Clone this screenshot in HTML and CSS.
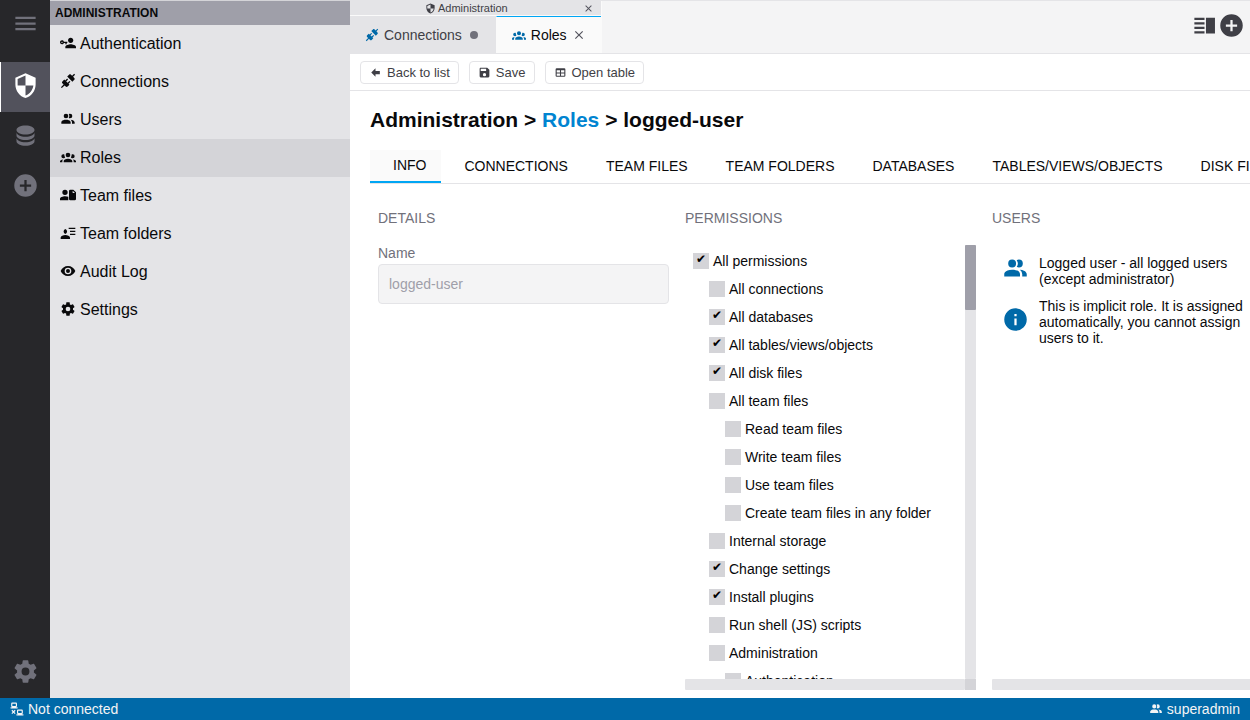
FILE: index.html
```html
<!DOCTYPE html>
<html lang="en">
<head>
  <meta charset="UTF-8">
  <meta name="viewport" content="width=device-width, initial-scale=1.0">
  <title>Roles</title>
  <link rel="stylesheet" href="styles.css">
</head>
<body>
  <svg class="sprite" aria-hidden="true">
    <symbol id="menu" viewBox="0 0 24 24"><path d="M3,6H21V8H3V6M3,11H21V13H3V11M3,16H21V18H3V16Z"/></symbol>
    <symbol id="shield" viewBox="0 0 24 24"><path d="M12,12H19C18.47,16.11 15.72,19.78 12,20.92V12H5V6.3L12,3.19M12,1L3,5V11C3,16.55 6.84,21.73 12,23C17.16,21.73 21,16.55 21,11V5L12,1Z"/></symbol>
    <symbol id="database" viewBox="0 0 24 24"><path d="M12,3C7.58,3 4,4.79 4,7C4,9.21 7.58,11 12,11C16.42,11 20,9.21 20,7C20,4.79 16.42,3 12,3M4,9V12C4,14.21 7.58,16 12,16C16.42,16 20,14.21 20,12V9C20,11.21 16.42,13 12,13C7.58,13 4,11.21 4,9M4,14V17C4,19.21 7.58,21 12,21C16.42,21 20,19.21 20,17V14C20,16.21 16.42,18 12,18C7.58,18 4,16.21 4,14Z"/></symbol>
    <symbol id="plus" viewBox="0 0 24 24"><path d="M17,13H13V17H11V13H7V11H11V7H13V11H17M12,2A10,10 0 0,0 2,12A10,10 0 0,0 12,22A10,10 0 0,0 22,12A10,10 0 0,0 12,2Z"/></symbol>
    <symbol id="cog" viewBox="0 0 24 24"><path d="M12,15.5A3.5,3.5 0 0,1 8.5,12A3.5,3.5 0 0,1 12,8.5A3.5,3.5 0 0,1 15.5,12A3.5,3.5 0 0,1 12,15.5M19.43,12.97C19.47,12.65 19.5,12.33 19.5,12C19.5,11.67 19.47,11.34 19.43,11L21.54,9.37C21.73,9.22 21.78,8.95 21.66,8.73L19.66,5.27C19.54,5.05 19.27,4.96 19.05,5.05L16.56,6.05C16.04,5.66 15.5,5.32 14.87,5.07L14.5,2.42C14.46,2.18 14.25,2 14,2H10C9.75,2 9.54,2.18 9.5,2.42L9.13,5.07C8.5,5.32 7.96,5.66 7.44,6.05L4.95,5.05C4.73,4.96 4.46,5.05 4.34,5.27L2.34,8.73C2.21,8.95 2.27,9.22 2.46,9.37L4.57,11C4.53,11.34 4.5,11.67 4.5,12C4.5,12.33 4.53,12.65 4.57,12.97L2.46,14.63C2.27,14.78 2.21,15.05 2.34,15.27L4.34,18.73C4.46,18.95 4.73,19.03 4.95,18.95L7.44,17.94C7.96,18.34 8.5,18.68 9.13,18.93L9.5,21.58C9.54,21.82 9.75,22 10,22H14C14.25,22 14.46,21.82 14.5,21.58L14.87,18.93C15.5,18.67 16.04,18.34 16.56,17.94L19.05,18.95C19.27,19.03 19.54,18.95 19.66,18.73L21.66,15.27C21.78,15.05 21.73,14.78 21.54,14.63L19.43,12.97Z"/></symbol>
    <symbol id="account-key" viewBox="0 0 24 24"><path d="M11 10V12H10V14H8V12H5.83C5.42 13.17 4.31 14 3 14C1.34 14 0 12.66 0 11S1.34 8 3 8C4.31 8 5.42 8.83 5.83 10H11M3 10C2.45 10 2 10.45 2 11S2.45 12 3 12 4 11.55 4 11 3.55 10 3 10M16 14C18.67 14 24 15.34 24 18V20H8V18C8 15.34 13.33 14 16 14M16 12C13.8 12 12 10.21 12 8S13.8 4 16 4 20 5.79 20 8 18.21 12 16 12Z"/></symbol>
    <symbol id="connection" viewBox="0 0 24 24"><path d="M21.4 7.5C22.2 8.3 22.2 9.6 21.4 10.3L18.6 13.1L10.8 5.3L13.6 2.5C14.4 1.7 15.7 1.7 16.4 2.5L18.2 4.3L21.2 1.3L22.6 2.7L19.6 5.7L21.4 7.5M15.6 13.3L14.2 11.9L11.4 14.7L9.3 12.6L12.1 9.8L10.7 8.4L7.9 11.2L6.4 9.8L3.6 12.6C2.8 13.4 2.8 14.7 3.6 15.4L5.4 17.2L1.4 21.2L2.8 22.6L6.8 18.6L8.6 20.4C9.4 21.2 10.7 21.2 11.4 20.4L14.2 17.6L12.8 16.2L15.6 13.3Z"/></symbol>
    <symbol id="users" viewBox="0 0 24 24"><path d="M16 17V19H2V17S2 13 9 13 16 17 16 17M12.5 7.5A3.5 3.5 0 1 0 9 11A3.5 3.5 0 0 0 12.5 7.5M15.94 13A5.32 5.32 0 0 1 18 17V19H22V17S22 13.37 15.94 13M15 4A3.39 3.39 0 0 0 13.07 4.59A5 5 0 0 1 13.07 10.41A3.39 3.39 0 0 0 15 11A3.5 3.5 0 0 0 15 4Z"/></symbol>
    <symbol id="group" viewBox="0 0 24 24"><path d="M12,5.5A3.5,3.5 0 0,1 15.5,9A3.5,3.5 0 0,1 12,12.5A3.5,3.5 0 0,1 8.5,9A3.5,3.5 0 0,1 12,5.5M5,8C5.56,8 6.08,8.15 6.53,8.42C6.38,9.85 6.8,11.27 7.66,12.38C7.16,13.34 6.16,14 5,14A3,3 0 0,1 2,11A3,3 0 0,1 5,8M19,8A3,3 0 0,1 22,11A3,3 0 0,1 19,14C17.84,14 16.84,13.34 16.34,12.38C17.2,11.27 17.62,9.85 17.47,8.42C17.92,8.15 18.44,8 19,8M5.5,18.25C5.5,16.18 8.41,14.5 12,14.5C15.59,14.5 18.5,16.18 18.5,18.25V20H5.5V18.25M0,20V18.5C0,17.11 1.89,15.94 4.45,15.6C3.86,16.28 3.5,17.22 3.5,18.25V20H0M24,20H20.5V18.25C20.5,17.22 20.14,16.28 19.55,15.6C22.11,15.94 24,17.11 24,18.5V20Z"/></symbol>
    <symbol id="account-file" viewBox="0 0 24 24"><path d="M7.5 4A4 4 0 0 1 7.5 12A4 4 0 0 1 7.5 4M7.5 14C9.5 14 11 14.3 12.5 14.7V20H0V18C0 15.5 4 14 7.5 14M15.5 4H20L24 8V18A2 2 0 0 1 22 20H15.5A2 2 0 0 1 13.5 18V6A2 2 0 0 1 15.5 4M19 5.500V9H22.500Z"/></symbol>
    <symbol id="account-details" viewBox="0 0 24 24"><path d="M13 4H23V6H13V4M15 8.5H23V10.5H15V8.5M15 13H23V15H15V13M8 6A4 4 0 0 1 8 13.5A4 4 0 0 1 8 6M8 15C11 15 15 16.3 15 18.7V21H1V18.7C1 16.3 5 15 8 15Z"/></symbol>
    <symbol id="eye" viewBox="0 0 24 24"><path d="M12,9A3,3 0 0,0 9,12A3,3 0 0,0 12,15A3,3 0 0,0 15,12A3,3 0 0,0 12,9M12,17A5,5 0 0,1 7,12A5,5 0 0,1 12,7A5,5 0 0,1 17,12A5,5 0 0,1 12,17M12,4.5C7,4.5 2.73,7.61 1,12C2.73,16.39 7,19.5 12,19.5C17,19.5 21.27,16.39 23,12C21.27,7.61 17,4.5 12,4.5Z"/></symbol>
    <symbol id="info" viewBox="0 0 24 24"><path d="M13,9H11V7H13M13,17H11V11H13M12,2A10,10 0 0,0 2,12A10,10 0 0,0 12,22A10,10 0 0,0 22,12A10,10 0 0,0 12,2Z"/></symbol>
    <symbol id="arrow-left" viewBox="0 0 24 24"><path d="M20,9V15H12V19.84L4.16,12L12,4.16V9H20Z"/></symbol>
    <symbol id="save" viewBox="0 0 24 24"><path d="M15,9H5V5H15M12,19A3,3 0 0,1 9,16A3,3 0 0,1 12,13A3,3 0 0,1 15,16A3,3 0 0,1 12,19M17,3H5C3.89,3 3,3.9 3,5V19A2,2 0 0,0 5,21H19A2,2 0 0,0 21,19V7L17,3Z"/></symbol>
    <symbol id="table" viewBox="0 0 24 24"><path d="M5,4H19A2,2 0 0,1 21,6V18A2,2 0 0,1 19,20H5A2,2 0 0,1 3,18V6A2,2 0 0,1 5,4M5,8V12H11V8H5M13,8V12H19V8H13M5,14V18H11V14H5M13,14V18H19V14H13Z"/></symbol>
    <symbol id="close" viewBox="0 0 24 24"><path d="M19,6.41L17.59,5L12,10.59L6.41,5L5,6.41L10.59,12L5,17.59L6.41,19L12,13.41L17.59,19L19,17.59L13.41,12L19,6.41Z"/></symbol>
    <symbol id="split" viewBox="0 0 24 24"><path d="M3 5H12V7H3V5M3 9H12V11H3V9M3 13H12V15H3V13M3 17H12V19H3V17M13.300 5H21.300V19H13.300V5Z"/></symbol>
    <symbol id="disconnect" viewBox="0 0 24 24"><path d="M4,1C2.89,1 2,1.89 2,3V7C2,8.11 2.89,9 4,9H1V11H13V9H10C11.11,9 12,8.11 12,7V3C12,1.89 11.11,1 10,1H4M4,3H10V7H4V3M14,13C12.89,13 12,13.89 12,15V19C12,20.11 12.89,21 14,21H11V23H23V21H20C21.11,21 22,20.11 22,19V15C22,13.89 21.11,13 20,13H14M3.88,13.46L2.46,14.88L4.59,17L2.46,19.12L3.88,20.54L6,18.41L8.12,20.54L9.54,19.12L7.41,17L9.54,14.88L8.12,13.46L6,15.59L3.88,13.46M14,15H20V19H14V15Z"/></symbol>
  </svg>

  <div class="workspace">
    <!-- icon rail -->
    <nav class="rail">
      <button class="rail-item rail-menu" aria-label="Menu"><svg class="icon"><use href="#menu"/></svg></button>
      <button class="rail-item active" aria-label="Administration"><svg class="icon"><use href="#shield"/></svg></button>
      <button class="rail-item" aria-label="Database"><svg class="icon"><use href="#database"/></svg></button>
      <button class="rail-item" aria-label="Add"><svg class="icon"><use href="#plus"/></svg></button>
      <button class="rail-item rail-bottom" aria-label="Settings"><svg class="icon"><use href="#cog"/></svg></button>
    </nav>

    <!-- side panel -->
    <aside class="panel">
      <div class="panel-title">ADMINISTRATION</div>
      <a class="panel-item" href="#"><svg class="icon"><use href="#account-key"/></svg>Authentication</a>
      <a class="panel-item" href="#"><svg class="icon"><use href="#connection"/></svg>Connections</a>
      <a class="panel-item" href="#"><svg class="icon"><use href="#users"/></svg>Users</a>
      <a class="panel-item selected" href="#"><svg class="icon"><use href="#group"/></svg>Roles</a>
      <a class="panel-item" href="#"><svg class="icon"><use href="#account-file"/></svg>Team files</a>
      <a class="panel-item" href="#"><svg class="icon"><use href="#account-details"/></svg>Team folders</a>
      <a class="panel-item" href="#"><svg class="icon"><use href="#eye"/></svg>Audit Log</a>
      <a class="panel-item" href="#"><svg class="icon"><use href="#cog"/></svg>Settings</a>
    </aside>

    <main class="main">
      <!-- open tabs -->
      <header class="tabs-bar">
        <div class="tab-group">
          <div class="group-title">
            <span class="group-name"><svg class="icon"><use href="#shield"/></svg>Administration</span>
            <button class="close-button" aria-label="Close group"><svg class="icon"><use href="#close"/></svg></button>
          </div>
          <div class="file-tabs">
            <div class="file-tab"><svg class="icon blue"><use href="#connection"/></svg>Connections<span class="unsaved"></span></div>
            <div class="file-tab active"><svg class="icon blue"><use href="#group"/></svg>Roles<button class="close-button" aria-label="Close tab"><svg class="icon"><use href="#close"/></svg></button></div>
          </div>
        </div>
        <div class="tabs-actions">
          <button aria-label="Split"><svg class="icon"><use href="#split"/></svg></button>
          <button aria-label="New tab"><svg class="icon"><use href="#plus"/></svg></button>
        </div>
      </header>

      <div class="toolbar">
        <button class="tool-button"><svg class="icon"><use href="#arrow-left"/></svg>Back to list</button>
        <button class="tool-button"><svg class="icon"><use href="#save"/></svg>Save</button>
        <button class="tool-button"><svg class="icon"><use href="#table"/></svg>Open table</button>
      </div>

      <section class="content">
        <h1>Administration &gt; <a href="#">Roles</a> &gt; logged-user</h1>

        <div class="page-tabs">
          <button class="page-tab active">INFO</button>
          <button class="page-tab">CONNECTIONS</button>
          <button class="page-tab">TEAM FILES</button>
          <button class="page-tab">TEAM FOLDERS</button>
          <button class="page-tab">DATABASES</button>
          <button class="page-tab">TABLES/VIEWS/OBJECTS</button>
          <button class="page-tab">DISK FILES</button>
        </div>

        <div class="columns">
          <div class="column">
            <h2>DETAILS</h2>
            <div class="field">
              <label for="name">Name</label>
              <input type="text" id="name" value="logged-user" disabled>
            </div>
          </div>

          <div class="column">
            <h2>PERMISSIONS</h2>
            <div class="scroller">
              <div class="scroll-view permissions">
                <label><input type="checkbox" checked>All permissions</label>
                <label class="level-1"><input type="checkbox">All connections</label>
                <label class="level-1"><input type="checkbox" checked>All databases</label>
                <label class="level-1"><input type="checkbox" checked>All tables/views/objects</label>
                <label class="level-1"><input type="checkbox" checked>All disk files</label>
                <label class="level-1"><input type="checkbox">All team files</label>
                <label class="level-2"><input type="checkbox">Read team files</label>
                <label class="level-2"><input type="checkbox">Write team files</label>
                <label class="level-2"><input type="checkbox">Use team files</label>
                <label class="level-2"><input type="checkbox">Create team files in any folder</label>
                <label class="level-1"><input type="checkbox">Internal storage</label>
                <label class="level-1"><input type="checkbox" checked>Change settings</label>
                <label class="level-1"><input type="checkbox" checked>Install plugins</label>
                <label class="level-1"><input type="checkbox">Run shell (JS) scripts</label>
                <label class="level-1"><input type="checkbox">Administration</label>
                <label class="level-2"><input type="checkbox">Authentication</label>
              </div>
              <div class="scroll-track"><div class="scroll-thumb"></div></div>
              <div class="scroll-track"></div>
              <div class="scroll-corner"></div>
            </div>
          </div>

          <div class="column">
            <h2>USERS</h2>
            <div class="scroller">
              <div class="scroll-view notes">
                <div class="note"><svg class="icon blue"><use href="#users"/></svg><p>Logged user - all logged users (except administrator)</p></div>
                <div class="note"><svg class="icon blue"><use href="#info"/></svg><p>This is implicit role. It is assigned automatically, you cannot assign users to it.</p></div>
              </div>
              <div class="scroll-track"></div>
              <div class="scroll-track"></div>
              <div class="scroll-corner"></div>
            </div>
          </div>
        </div>
      </section>
    </main>
  </div>

  <footer class="statusbar">
    <span><svg class="icon"><use href="#disconnect"/></svg>Not connected</span>
    <span><svg class="icon"><use href="#users"/></svg>superadmin</span>
  </footer>
</body>
</html>
```
FILE: styles.css
```css
* {
  box-sizing: border-box;
}

body {
  margin: 0;
  height: 100vh;
  display: flex;
  flex-direction: column;
  overflow: hidden;
  font-family: "Liberation Sans", Arial, sans-serif;
  font-size: 14px;
  line-height: 16px;
  color: #09090b;
  background-color: #fff;
}

button {
  padding: 0;
  border: none;
  background: none;
  font: inherit;
  color: inherit;
  cursor: pointer;
}

a {
  color: inherit;
  text-decoration: none;
}

.sprite {
  display: none;
}

.icon {
  width: 16px;
  height: 16px;
  flex-shrink: 0;
  fill: currentColor;
}

.blue {
  color: #0069a8;
}

.workspace {
  flex: 1;
  min-height: 0;
  display: flex;
}

/* rail */
.rail {
  width: 50px;
  flex-shrink: 0;
  display: flex;
  flex-direction: column;
  background-color: #27272a;
  color: #71717b;
}

.rail-item {
  height: 50px;
  padding-bottom: 3px;
  display: flex;
  align-items: center;
  justify-content: center;
}

.rail-item .icon {
  width: 27px;
  height: 27px;
}

.rail-menu {
  margin-bottom: 12px;
}

.rail-item.active {
  color: #fff;
  background-color: #52525c;
  border-left: 1px solid #fff;
}

.rail-bottom {
  margin-top: auto;
}

/* side panel */
.panel {
  width: 300px;
  flex-shrink: 0;
  background-color: #e4e4e7;
  border-top: 1px solid #d4d4d8;
}

.panel-title {
  height: 24px;
  padding: 0 5px;
  font-size: 12px;
  font-weight: bold;
  line-height: 24px;
  background-color: #9f9fa9;
}

.panel-item {
  height: 38px;
  padding: 0 10px;
  display: flex;
  align-items: center;
  gap: 4px;
  font-size: 16px;
}

.panel-item .icon {
  margin-bottom: 2px;
}

.panel-item.selected {
  background-color: #d4d4d8;
}

/* open tabs */
.main {
  flex: 1;
  min-width: 0;
  display: flex;
  flex-direction: column;
}

.tabs-bar {
  height: 54px;
  flex-shrink: 0;
  display: flex;
  justify-content: space-between;
  background-color: #f4f4f5;
  border-top: 1px solid #e4e4e7;
  border-bottom: 1px solid #e4e4e7;
}

.tab-group {
  display: flex;
  flex-direction: column;
  border-right: 1px solid #fafafa;
}

.group-title {
  height: 15px;
  padding-right: 7px;
  display: flex;
  align-items: center;
  font-size: 11px;
  color: #3f3f46;
  background-color: #e4e4e7;
  border-bottom: 1px solid #fafafa;
}

.group-name {
  flex: 1;
  display: flex;
  align-items: center;
  justify-content: center;
  gap: 2px;
}

.group-title .icon {
  width: 11px;
  height: 11px;
}

.close-button {
  display: flex;
  color: #52525c;
}

.file-tabs {
  flex: 1;
  display: flex;
}

.file-tab {
  padding: 0 15px;
  display: flex;
  align-items: center;
  gap: 5px;
  color: #3f3f46;
  background-color: #e4e4e7;
  border-top: 1px solid #e4e4e7;
}

.file-tab .icon {
  width: 14px;
  height: 14px;
}

.file-tab.active {
  color: #09090b;
  background-color: #fafafa;
  border-left: 1px solid #fafafa;
  border-top-color: #00a6f4;
}

.unsaved {
  width: 8px;
  height: 8px;
  margin: 0 3px;
  border-radius: 50%;
  background-color: #71717b;
}

.tabs-actions {
  padding: 0 5px 3px 0;
  display: flex;
  align-items: center;
  color: #3f3f46;
}

.tabs-actions button {
  display: flex;
}

.tabs-actions .icon {
  width: 27px;
  height: 27px;
}

/* toolbar */
.toolbar {
  padding: 7px 10px 6px;
  display: flex;
  gap: 10px;
  border-bottom: 1px solid #e4e4e7;
}

.tool-button {
  height: 23px;
  padding: 0 8px;
  display: flex;
  align-items: center;
  gap: 5px;
  font-size: 13px;
  color: #3f3f46;
  border: 1px solid #e4e4e7;
  border-radius: 4px;
}

.tool-button .icon {
  width: 13px;
  height: 13px;
}

/* content */
.content {
  flex: 1;
  min-height: 0;
  padding: 16px 0 8px 20px;
  display: flex;
  flex-direction: column;
  overflow: hidden;
}

h1 {
  margin: 0 0 17px;
  font-size: 21px;
  line-height: 26px;
}

h1 a {
  color: #0084d1;
}

.page-tabs {
  height: 34px;
  flex-shrink: 0;
  display: flex;
  border-bottom: 1px solid #e4e4e7;
}

.page-tab {
  padding: 0 15px 2px 23px;
  white-space: nowrap;
}

.page-tab.active {
  background-color: #fafafa;
  border-bottom: 2px solid #00a6f4;
}

.columns {
  flex: 1;
  min-height: 0;
  padding: 26px 8px 0;
  display: flex;
  gap: 16px;
}

.column {
  width: 291px;
  flex-shrink: 0;
  display: flex;
  flex-direction: column;
}

h2 {
  margin: 0 0 19px;
  font-size: 14px;
  font-weight: normal;
  line-height: 16px;
  color: #71717b;
}

.field {
  display: flex;
  flex-direction: column;
  gap: 3px;
  color: #71717b;
}

.field input {
  height: 40px;
  padding: 0 10px;
  font: inherit;
  color: #9f9fa9;
  background-color: #f4f4f5;
  border: 1px solid #e4e4e7;
  border-radius: 4px;
}

/* scroll areas with always visible bars */
.scroller {
  flex: 1;
  min-height: 0;
  display: grid;
  grid-template-columns: minmax(0, 1fr) 11px;
  grid-template-rows: minmax(0, 1fr) 11px;
}

.scroll-view {
  overflow: auto;
  scrollbar-width: none;
}

.scroll-track {
  background-color: #e4e4e7;
  border-radius: 1px;
}

.scroll-thumb {
  height: 15%;
  background-color: #9f9fa9;
  border-radius: 1px;
}

.scroll-corner {
  background-color: #d4d4d8;
}

.permissions {
  padding: 2px 8px;
}

.permissions label {
  height: 28px;
  display: flex;
  align-items: center;
  gap: 4px;
}

.permissions .level-1 {
  padding-left: 16px;
}

.permissions .level-2 {
  padding-left: 32px;
}

.permissions input {
  appearance: none;
  width: 16px;
  height: 16px;
  margin: 0;
  font-family: "DejaVu Sans", sans-serif;
  font-size: 12px;
  font-weight: bold;
  line-height: 13px;
  text-align: center;
  background-color: #d4d4d8;
}

.permissions input:checked::before {
  content: "✔";
  display: block;
}

.notes {
  padding: 10px;
  display: flex;
  flex-direction: column;
  gap: 11px;
}

.note {
  display: flex;
  align-items: center;
  gap: 10px;
}

.note .icon {
  width: 27px;
  height: 27px;
  margin-bottom: 5px;
}

.note p {
  margin: 0;
}

/* status bar */
.statusbar {
  height: 22px;
  padding: 0 10px;
  display: flex;
  align-items: center;
  justify-content: space-between;
  color: #f4f4f5;
  background-color: #0069a8;
}

.statusbar span {
  display: flex;
  align-items: center;
  gap: 4px;
}

.statusbar .icon {
  width: 14px;
  height: 14px;
}
```
